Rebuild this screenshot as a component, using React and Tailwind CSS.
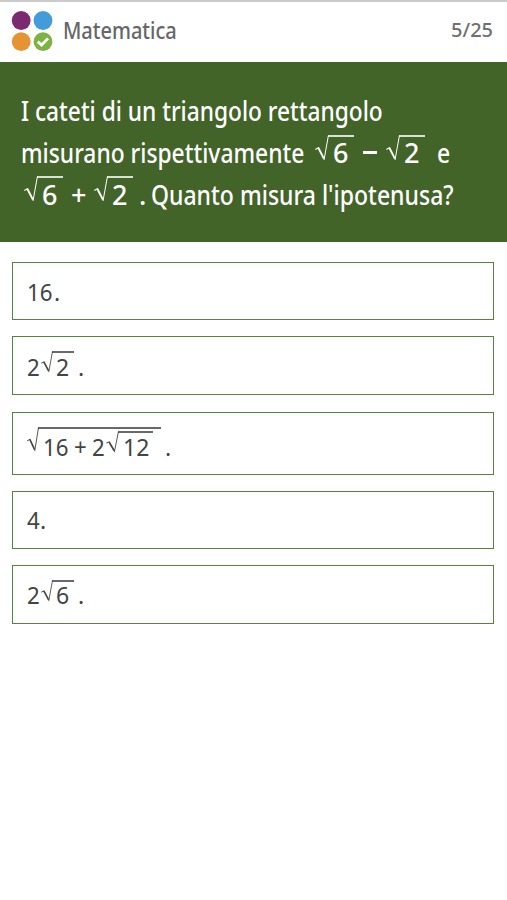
import clsx from 'clsx';

function Text({ children, className, scale }) {
  return (
    <span className={clsx('block shrink-0 whitespace-nowrap', className)}>
      <span className={clsx('inline-block origin-left', scale)}>{children}</span>
    </span>
  );
}

// Radical sign with its bar, the value sits under the bar
function Root({ children, className, bar, padding = 'pl-[18px]', sign = 'h-[26px] w-[14px]' }) {
  return (
    <span className={clsx('relative block shrink-0', padding, className)}>
      <svg
        viewBox="0 0 14 26"
        preserveAspectRatio="none"
        className={clsx('absolute left-0 top-0', sign)}
        fill="none"
        stroke="currentColor"
      >
        <path d="M0.3 14.4 L3.8 12.6" strokeWidth="1.1" />
        <path d="M3.3 12.8 L8.9 23.6" strokeWidth="1.9" />
        <path d="M9 25 L13.4 0.6" strokeWidth="1" />
      </svg>
      <span className={clsx('absolute top-0 h-[1.5px] bg-current opacity-80', bar)} />
      {children}
    </span>
  );
}

function Logo() {
  return (
    <svg viewBox="0 0 42 42" className="h-[42px] w-[42px]">
      <circle cx="10.2" cy="10.5" r="9.4" fill="#7b2a70" />
      <circle cx="32" cy="10.5" r="9.4" fill="#429cdc" />
      <circle cx="10.2" cy="31.7" r="9.4" fill="#e69433" />
      <circle cx="32" cy="31.7" r="9.4" fill="#7cb342" />
      <path d="M26.8 31.6 L30.6 35 L37 28.4" fill="none" stroke="#fff" strokeWidth="2.8" />
    </svg>
  );
}

function Answer({ children, className, leading = 'leading-[32px]' }) {
  return (
    <button
      className={clsx(
        'flex w-full border border-[#56833f] bg-white pl-[14px] text-left text-[23px] text-[#444]',
        leading,
        className
      )}
    >
      {children}
    </button>
  );
}

export default function App() {
  return (
    <div className="min-h-screen w-full bg-white font-['Noto_Sans','Open_Sans',sans-serif]">
      {/* Header */}
      <header className="flex h-[62px] items-start justify-between border-t-2 border-[#cbcbcb] pl-[11px] pr-[13px]">
        <div className="flex pt-[8px]">
          <Logo />
          <Text className="ml-[10px] w-[115px] pt-[4px] text-[23px] leading-[32px] font-medium text-[#666]" scale="scale-x-[0.87]">
            Matematica
          </Text>
        </div>
        <Text className="w-[43px] pt-[12px] text-[20px] leading-[32px] font-medium text-[#707070]" scale="scale-x-100">
          5/25
        </Text>
      </header>

      {/* Question */}
      <section className="h-[180px] bg-[#426428] pl-[21px] pt-[28px] text-[27px] leading-[42px] font-medium text-white">
        <div className="flex h-[42px]">
          <Text className="w-[361px]" scale="scale-x-[0.842]">I cateti di un triangolo rettangolo</Text>
        </div>
        <div className="flex h-[42px]">
          <Text className="w-[294px]" scale="scale-x-[0.845]">misurano rispettivamente</Text>
          <Root className="mt-[3px] h-[39px] w-[48px] leading-[36px]" bar="left-[13px] w-[26px]">6</Root>
          <span className="mt-[19px] h-[3px] w-[14px] bg-white" />
          <Root className="mt-[3px] ml-[9px] h-[39px] w-[51px] leading-[36px]" bar="left-[13px] w-[26px]">2</Root>
          <Text scale="scale-x-[0.85]">e</Text>
        </div>
        <div className="flex h-[42px] pl-[3px]">
          <Root className="mt-[2px] h-[39px] w-[47px] leading-[38px]" bar="left-[13px] w-[26px]">6</Root>
          <Text className="w-[23px]" scale="scale-x-100">+</Text>
          <Root className="mt-[2px] h-[39px] w-[45px] leading-[38px]" bar="left-[13px] w-[26px]">2</Root>
          <Text className="w-[12px]" scale="scale-x-100">.</Text>
          <Text scale="scale-x-[0.852]">Quanto misura l'ipotenusa?</Text>
        </div>
      </section>

      {/* Answers */}
      <main className="flex flex-col pl-[12px] pr-[13px] pt-[20px]">
        <Answer className="h-[58px] pt-[13px]">
          <Text className="w-[27px]" scale="scale-x-[0.97]">16</Text>.
        </Answer>
        <Answer className="mt-[16px] h-[59px] pt-[14px]">
          <Text className="w-[14px]" scale="scale-x-[0.97]">2</Text>
          <Root className="w-[37px]" bar="left-[11px] w-[22px]" padding="pl-[15px]" sign="h-[22px] w-[12px]">2</Root>.
        </Answer>
        <Answer className="mt-[17px] h-[63px] pt-[14px]">
          <Root className="flex w-[138px]" bar="left-[11px] w-[123px]" padding="pl-[16px]" sign="h-[25px] w-[12px]">
            <Text className="w-[31px] pt-[4px]" scale="scale-x-[0.97]">16</Text>
            <Text className="w-[18px] pt-[4px]" scale="scale-x-[0.97]">+</Text>
            <Text className="w-[14px] pt-[4px]" scale="scale-x-[0.97]">2</Text>
            <Root className="mt-[4px]" bar="left-[12px] w-[35px]" padding="pl-[17px]" sign="h-[22px] w-[13px]">12</Root>
          </Root>
          <span className="pt-[4px]">.</span>
        </Answer>
        <Answer className="mt-[16px] h-[58px] pt-[12px]">
          <Text className="w-[13px]" scale="scale-x-[0.97]">4</Text>.
        </Answer>
        <Answer className="mt-[16px] h-[59px] pt-[14px]" leading="leading-[30px]">
          <Text className="w-[14px]" scale="scale-x-[0.97]">2</Text>
          <Root className="w-[37px]" bar="left-[11px] w-[22px]" padding="pl-[15px]" sign="h-[22px] w-[12px]">6</Root>.
        </Answer>
      </main>
    </div>
  );
}
